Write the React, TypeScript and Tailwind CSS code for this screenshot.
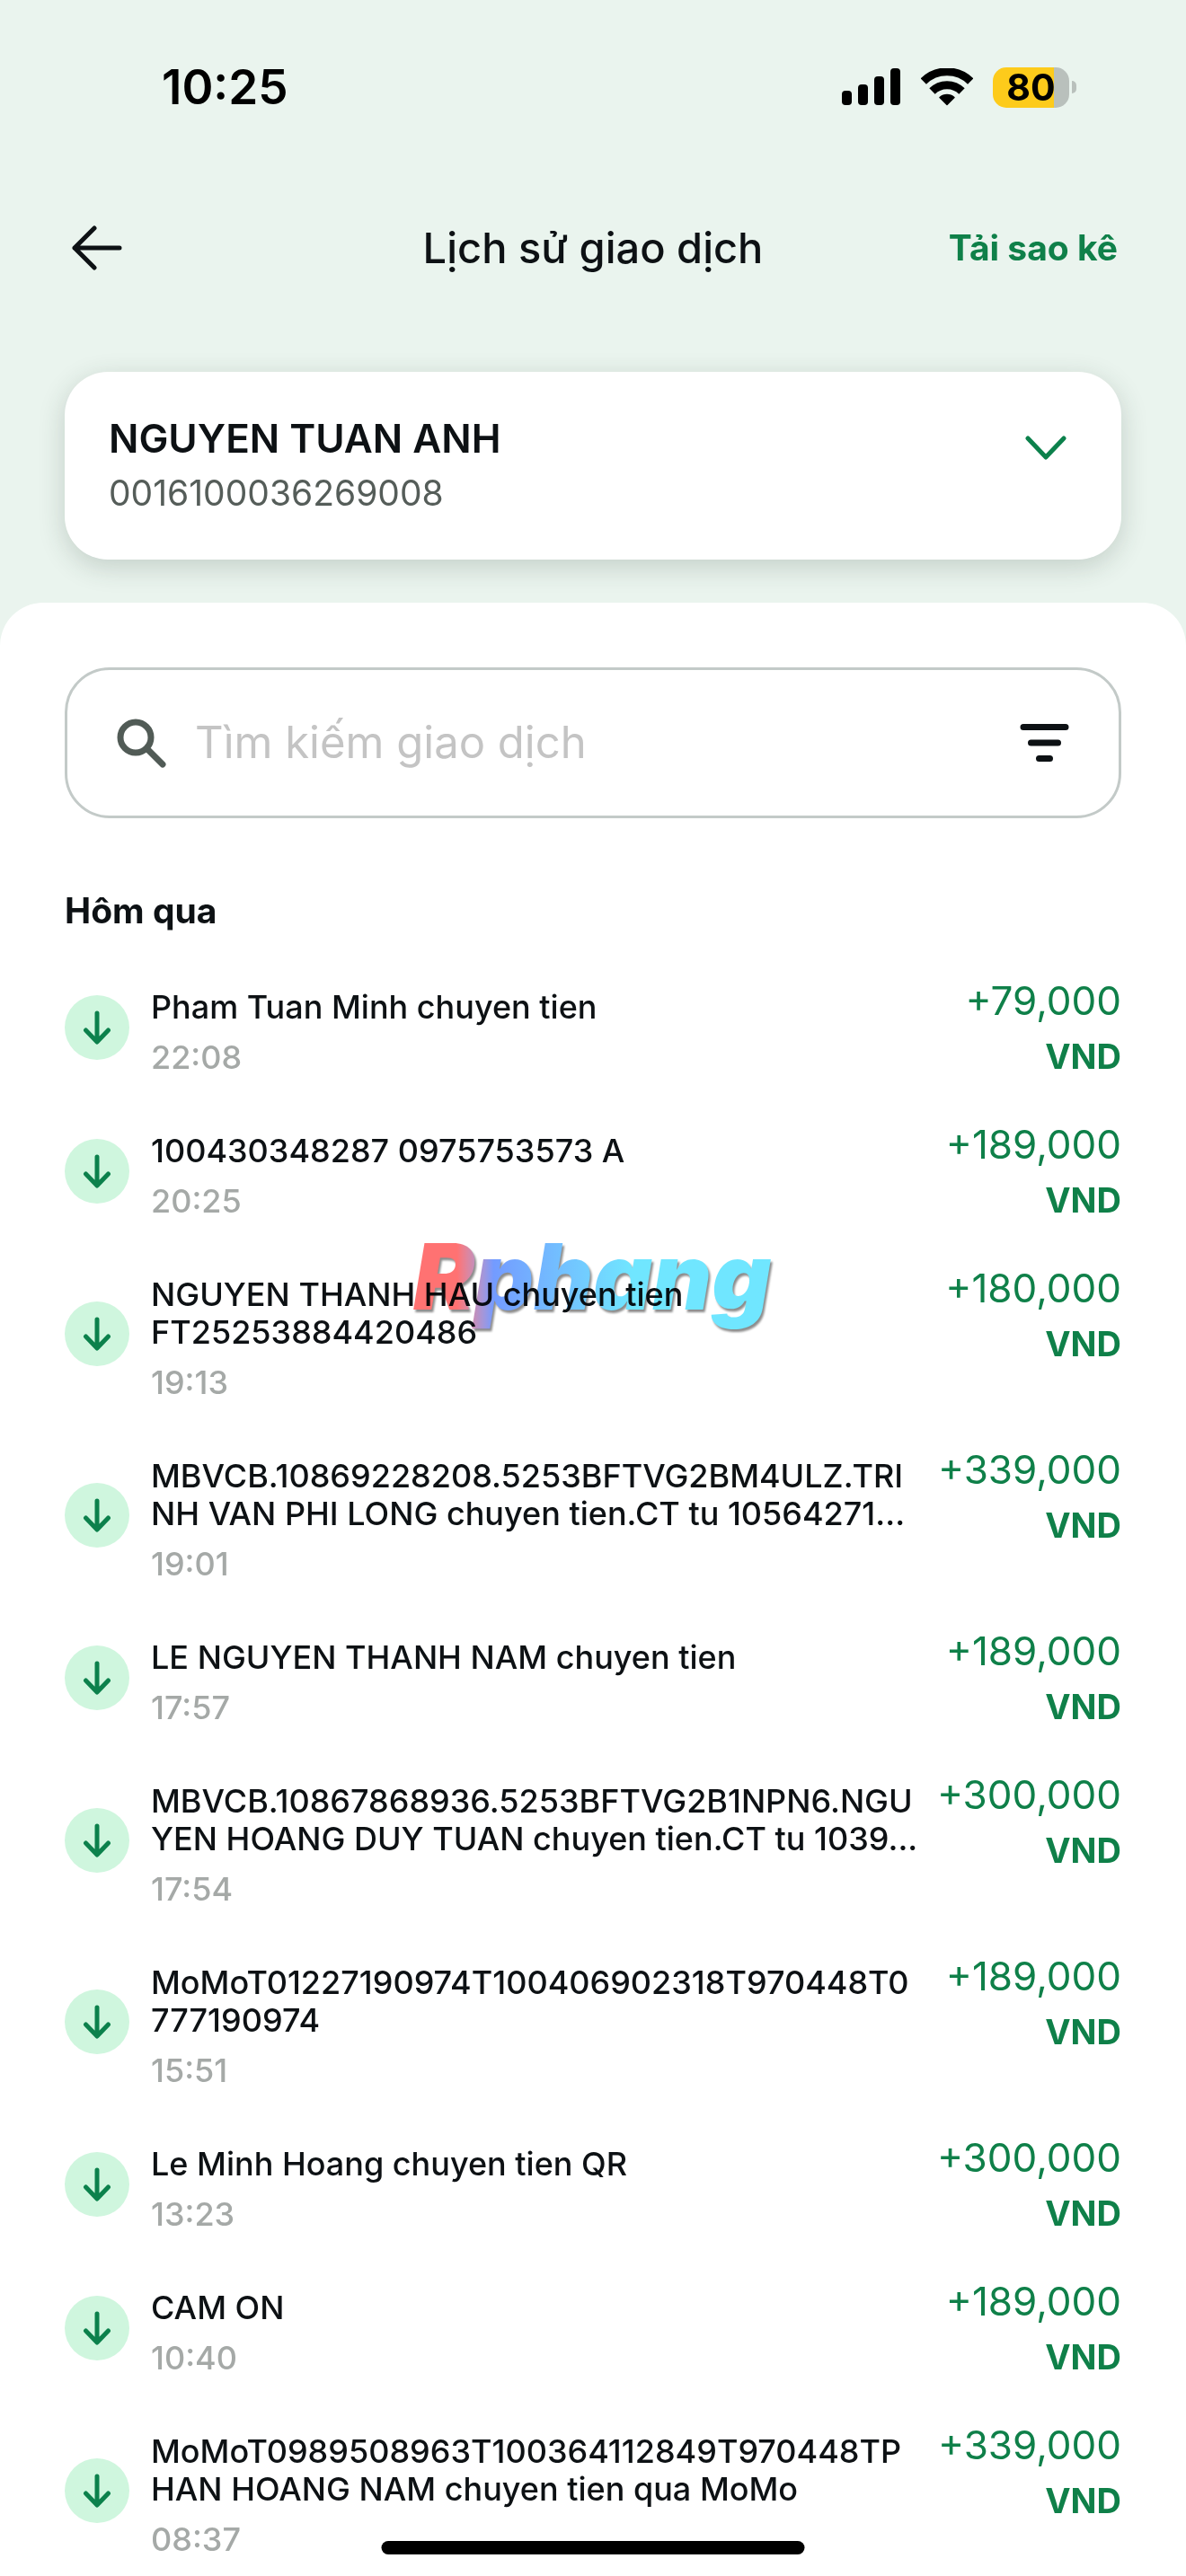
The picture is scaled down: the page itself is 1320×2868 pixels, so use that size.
import { useState } from 'react'

interface Transaction {
  id: number
  title: string
  time: string
  amount: string
}

const transactions: Transaction[] = [
  { id: 1, title: 'Pham Tuan Minh chuyen tien', time: '22:08', amount: '+79,000' },
  { id: 2, title: '100430348287 0975753573 A', time: '20:25', amount: '+189,000' },
  { id: 3, title: 'NGUYEN THANH HAU chuyen tien\nFT25253884420486', time: '19:13', amount: '+180,000' },
  { id: 4, title: 'MBVCB.10869228208.5253BFTVG2BM4ULZ.TRI\nNH VAN PHI LONG chuyen tien.CT tu 10564271...', time: '19:01', amount: '+339,000' },
  { id: 5, title: 'LE NGUYEN THANH NAM chuyen tien', time: '17:57', amount: '+189,000' },
  { id: 6, title: 'MBVCB.10867868936.5253BFTVG2B1NPN6.NGU\nYEN HOANG DUY TUAN chuyen tien.CT tu 1039...', time: '17:54', amount: '+300,000' },
  { id: 7, title: 'MoMoT01227190974T100406902318T970448T0\n777190974', time: '15:51', amount: '+189,000' },
  { id: 8, title: 'Le Minh Hoang chuyen tien QR', time: '13:23', amount: '+300,000' },
  { id: 9, title: 'CAM ON', time: '10:40', amount: '+189,000' },
  { id: 10, title: 'MoMoT0989508963T100364112849T970448TP\nHAN HOANG NAM chuyen tien qua MoMo', time: '08:37', amount: '+339,000' },
]

function StatusBar() {
  return (
    <div className="flex h-48 items-center justify-between pt-[2px] pr-[122px] pl-[180px] text-black">
      <span className="text-[53px] leading-none font-semibold">10:25</span>
      <div className="flex items-center">
        <svg className="h-[42px] w-[66px]" viewBox="0 0 66 42" fill="currentColor">
          <rect x="0" y="25" width="11" height="16" rx="4" />
          <rect x="18" y="18" width="11" height="23" rx="4" />
          <rect x="36" y="9" width="11" height="32" rx="4" />
          <rect x="54" y="0" width="11" height="41" rx="4" />
        </svg>
        <svg className="ml-[22px] h-[42px] w-[58px]" viewBox="0 0 58 42" fill="none" stroke="currentColor">
          <path d="M2.800 14.500A37.500 37.500 0 0 1 55.200 14.500" strokeWidth="9" />
          <path d="M12.500 25.500A23.300 23.300 0 0 1 45.500 25.500" strokeWidth="9" />
          <path d="M29 40.500L21 32.500A12 12 0 0 1 37 32.500Z" strokeWidth="1.500" strokeLinejoin="round" fill="currentColor" />
        </svg>
        <div className="ml-[22px] flex h-[45px] w-[85px] items-center justify-center rounded-[15px] bg-linear-to-r from-[#fdcb1b] from-80% to-[#b9c0bc] to-80% text-[41px] leading-none font-bold">
          80
        </div>
        <div className="ml-[3px] h-[14px] w-[5px] rounded-r-full bg-[#b9c0bc]" />
      </div>
    </div>
  )
}

function TransactionRow({ tx }: { tx: Transaction }) {
  return (
    <li className="flex items-center">
      <span className="flex size-[72px] shrink-0 items-center justify-center rounded-full bg-[#cff6de]">
        <svg className="h-[38px] w-[32px]" viewBox="0 0 32 38" fill="none" stroke="#0c814c" strokeWidth="5" strokeLinecap="round" strokeLinejoin="round">
          <path d="M16 3v31M3.500 22l12.500 13 12.500-13" />
        </svg>
      </span>
      <div className="ml-6 flex-1 pt-9 pb-[26px]">
        <p className="text-[36px] leading-[42px] font-medium whitespace-pre text-[#0d1114]">{tx.title}</p>
        <p className="mt-[14px] text-[36px] leading-[42px] font-medium text-[#a5a9a7]">{tx.time}</p>
      </div>
      <div className="flex shrink-0 flex-col self-start pt-[22px] text-right text-[#0f8049]">
        <span className="text-[44px] leading-[56px]">{tx.amount}</span>
        <span className="mt-1.5 text-[38px] leading-[56px] font-bold">VND</span>
      </div>
    </li>
  )
}

export default function App() {
  const [query, setQuery] = useState('')

  return (
    <div className="relative flex h-screen flex-col overflow-hidden bg-[#eaf4ee] font-['Inter','Liberation_Sans',sans-serif]">
      <StatusBar />

      {/* Header */}
      <header className="grid h-[168px] grid-cols-[1fr_auto_1fr] items-center px-[76px]">
        <button type="button" aria-label="Quay lại" className="justify-self-start">
          <svg className="h-[52px] w-[62px]" viewBox="0 0 62 52" fill="none" stroke="#0d1114" strokeWidth="5" strokeLinecap="round" strokeLinejoin="round">
            <path d="M57 26H7M29 4L7 26l22 22" />
          </svg>
        </button>
        <h1 className="text-[47px] font-medium text-[#0d1114]">Lịch sử giao dịch</h1>
        <a href="#statement" className="justify-self-end text-[39px] font-bold text-[#0f8049]">Tải sao kê</a>
      </header>

      {/* Account selector */}
      <button
        type="button"
        className="mx-[72px] mt-[54px] flex h-[209px] shrink-0 items-center justify-between rounded-[48px] bg-white pr-[58px] pl-[49px] text-left shadow-[0_8px_30px_rgba(40,60,50,0.2)]"
      >
        <span className="flex flex-col">
          <span className="text-[44px] leading-[60px] font-semibold text-[#0d1114]">NGUYEN TUAN ANH</span>
          <span className="text-[39px] leading-[62px] text-[#555d59]">0016100036269008</span>
        </span>
        <svg className="mb-10 h-[30px] w-[52px]" viewBox="0 0 52 30" fill="none" stroke="#0c814c" strokeWidth="5" strokeLinecap="round" strokeLinejoin="round">
          <path d="M6 4l20 21L46 4" />
        </svg>
      </button>

      {/* Transaction sheet */}
      <main className="relative mt-12 flex-1 overflow-hidden rounded-t-[48px] bg-white px-[72px] pt-[72px]">
        <div className="flex h-[168px] items-center rounded-[50px] border-[3px] border-[#c3cac8] px-[52px]">
          <svg className="size-[60px] shrink-0" viewBox="0 0 60 60" fill="none" stroke="#515b56" strokeLinecap="round">
            <circle cx="24" cy="24" r="17" strokeWidth="7" />
            <path d="M37 37l17 17" strokeWidth="7" />
          </svg>
          <input
            type="text"
            aria-label="Tìm kiếm giao dịch"
            placeholder="Tìm kiếm giao dịch"
            value={query}
            onChange={(e) => setQuery(e.target.value)}
            className="ml-[30px] min-w-0 flex-1 text-[49px] outline-none placeholder:text-[#c4c4c4]"
          />
          <button type="button" aria-label="Bộ lọc">
            <svg className="h-[44px] w-[60px]" viewBox="0 0 60 44" fill="none" stroke="#0d1114" strokeWidth="7" strokeLinecap="round">
              <path d="M6 4.500h47M14.500 22h30M23.500 39.500h12" />
            </svg>
          </button>
        </div>

        <h2 className="mt-[75px] text-[39px] leading-[56px] font-bold text-[#0d1114]">Hôm qua</h2>
        <ul className="mt-[22px]">
          {transactions.map((tx) => (
            <TransactionRow key={tx.id} tx={tx} />
          ))}
        </ul>

        {/* Brand watermark over the list */}
        <span className="pointer-events-none absolute top-[688px] left-[460px] bg-linear-to-r from-[#ff7272] from-12% via-[#739bff] via-22% to-[#70e6ff] to-60% bg-clip-text pr-2 text-[102px] leading-[124px] font-black text-transparent italic mix-blend-multiply drop-shadow-[2px_3px_1px_rgba(0,0,0,0.45)]">
          Rphang
        </span>
      </main>

      {/* Home indicator */}
      <div className="absolute bottom-6 left-1/2 h-[15px] w-[471px] -translate-x-1/2 rounded-full bg-black" />
    </div>
  )
}
